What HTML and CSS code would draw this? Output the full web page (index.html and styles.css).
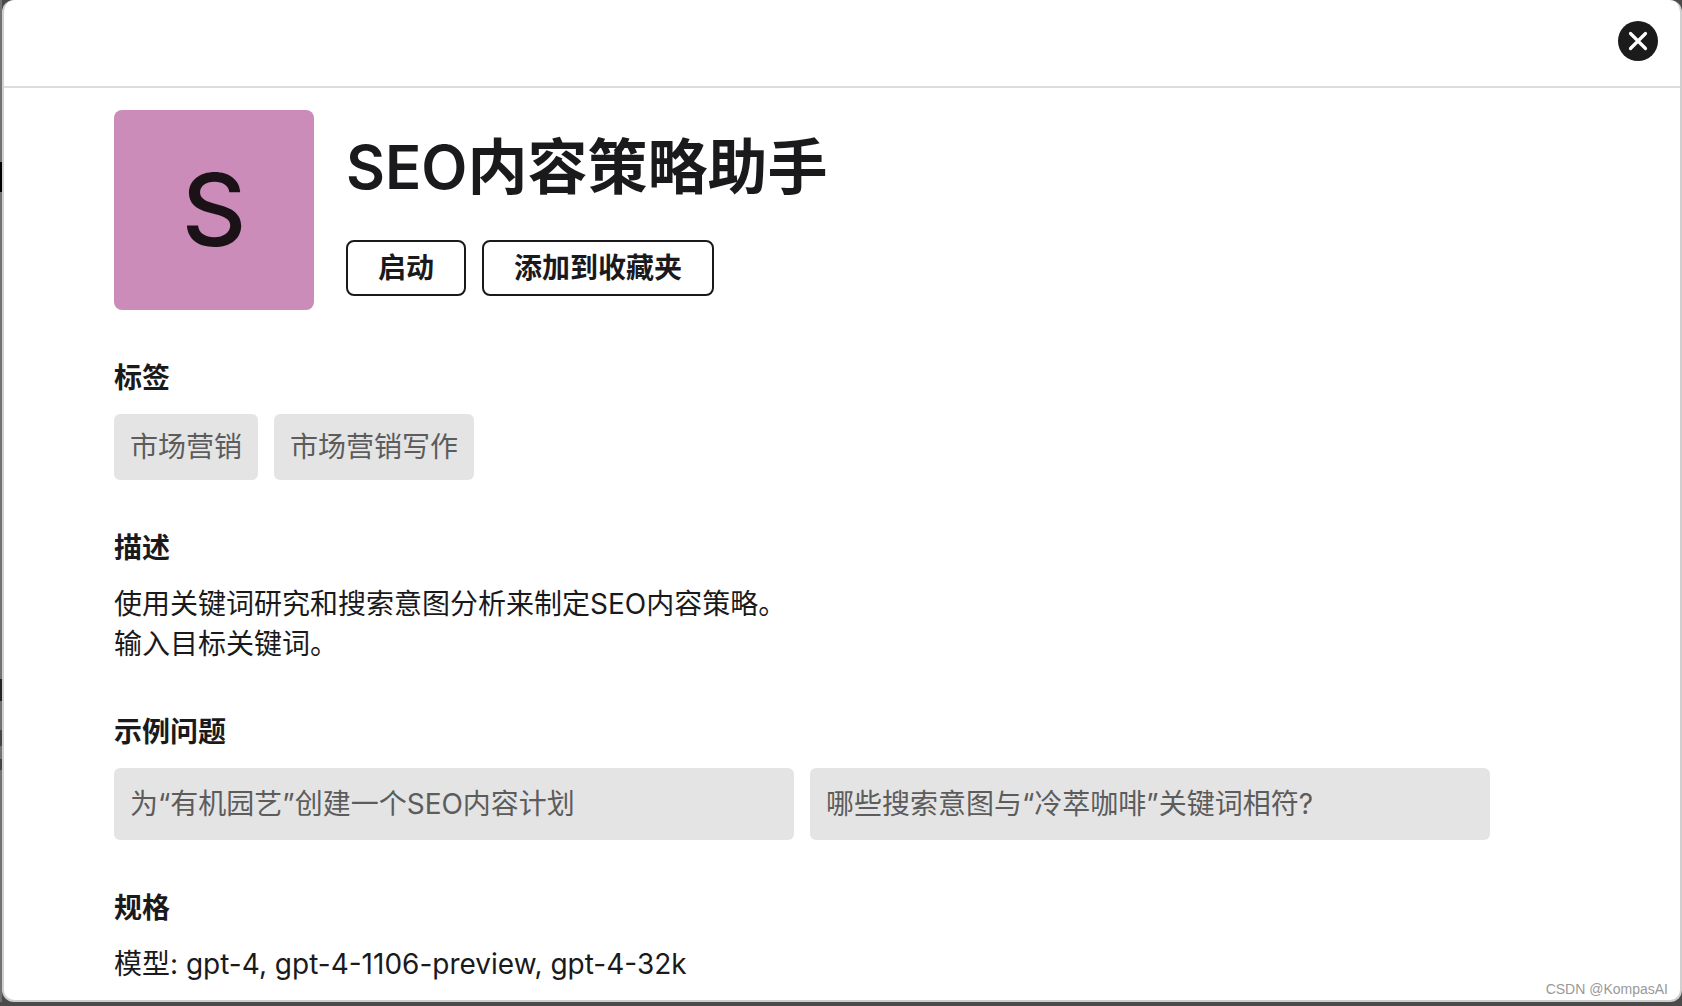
FILE: index.html
```html
<!DOCTYPE html>
<html lang="zh-CN">

<head>
    <meta charset="UTF-8">
    <meta name="viewport" content="width=device-width, initial-scale=1.0">
    <title>SEO内容策略助手</title>
    <link rel="stylesheet" href="styles.css">
</head>

<body>

    <div class="modal" role="dialog" aria-labelledby="assistant-name">
        <header class="modal-header">
            <button class="close-btn" type="button" aria-label="关闭">
                <svg viewBox="0 0 40 40" width="40" height="40" aria-hidden="true">
                    <circle cx="20" cy="20" r="20" fill="#1b1b1b" />
                    <path d="M12.5 12.5L27.5 27.5M27.5 12.5L12.5 27.5" stroke="#fff" stroke-width="3.2" stroke-linecap="round" />
                </svg>
            </button>
        </header>

        <main class="modal-body">
            <!-- Assistant name and actions -->
            <div class="intro">
                <div class="avatar">S</div>
                <div class="intro-text">
                    <h1 id="assistant-name">SEO内容策略助手</h1>
                    <div class="actions">
                        <button class="btn" type="button">启动</button>
                        <button class="btn" type="button">添加到收藏夹</button>
                    </div>
                </div>
            </div>

            <section>
                <h2>标签</h2>
                <div class="tags">
                    <span class="tag">市场营销</span>
                    <span class="tag">市场营销写作</span>
                </div>
            </section>

            <section>
                <h2>描述</h2>
                <p>使用关键词研究和搜索意图分析来制定SEO内容策略。<br>输入目标关键词。</p>
            </section>

            <section>
                <h2>示例问题</h2>
                <div class="questions">
                    <button class="question" type="button">为“有机园艺”创建一个SEO内容计划</button>
                    <button class="question" type="button">哪些搜索意图与“冷萃咖啡”关键词相符?</button>
                </div>
            </section>

            <section>
                <h2>规格</h2>
                <p>模型: gpt-4, gpt-4-1106-preview, gpt-4-32k</p>
            </section>
        </main>
    </div>

    <div class="watermark">CSDN @KompasAI</div>

</body>

</html>
```

FILE: styles.css
```css
* {
    box-sizing: border-box;
}

body {
    margin: 0;
    min-height: 100vh;
    padding: 0 0 4px 2px;
    display: flex;
    font-family: Inter, "Noto Sans CJK SC", sans-serif;
    font-size: 28px;
    line-height: 40px;
    color: #1a1a1c;
    background-color: #4a4a4a;
    /* edge of the dimmed page behind the modal */
    background-image: linear-gradient(#727272 162px, #000 162px, #000 192px, #727272 192px, #727272 679px, #222 679px, #222 701px, #727272 701px, #727272 730px, #444 730px, #444 746px, #727272 746px, #727272 759px, #444 759px, #444 770px, #727272 770px);
    background-size: 2px calc(100% - 4px);
    background-repeat: no-repeat;
}

.modal {
    flex: 1;
    background-color: #fff;
    border: 2px solid #cfcfcf;
    border-top: none;
    border-radius: 12px;
}

.modal-header {
    display: flex;
    justify-content: flex-end;
    padding: 21px 22px 25px;
    border-bottom: 2px solid #dcdcdc;
}

.close-btn {
    display: flex;
    padding: 0;
    border: none;
    background: none;
    cursor: pointer;
}

.modal-body {
    display: flex;
    flex-direction: column;
    gap: 48px;
    padding: 22px 190px 16px 110px;
}

.intro {
    display: flex;
    gap: 32px;
}

.avatar {
    display: flex;
    justify-content: center;
    align-items: center;
    width: 200px;
    height: 200px;
    border-radius: 8px;
    background-color: #cb8cb9;
    color: #1b1218;
    font-size: 100px;
    font-weight: 500;
}

.intro-text {
    display: flex;
    flex-direction: column;
    justify-content: center;
    gap: 30px;
}

h1 {
    margin: 0;
    font-size: 60px;
    line-height: 86px;
    font-weight: 600;
}

h2 {
    margin: 0 0 16px;
    font-size: 28px;
    line-height: 40px;
    font-weight: 600;
}

p {
    margin: 0;
}

.actions,
.tags {
    display: flex;
    gap: 16px;
}

.btn {
    height: 56px;
    padding: 0 30px;
    border: 2px solid #1a1a1c;
    border-radius: 8px;
    background-color: #fff;
    color: #1a1a1c;
    font: inherit;
    font-weight: 600;
    cursor: pointer;
}

.tag {
    padding: 13px 16px;
    border-radius: 6px;
    background-color: #e4e4e4;
    color: #5c5c5c;
}

.questions {
    display: grid;
    grid-template-columns: 1fr 1fr;
    gap: 16px;
}

.question {
    padding: 16px;
    border: none;
    border-radius: 6px;
    background-color: #e4e4e4;
    color: #5c5c5c;
    font: inherit;
    text-align: left;
    cursor: pointer;
}

.watermark {
    position: absolute;
    right: 14px;
    bottom: 7px;
    font-family: "Liberation Sans", sans-serif;
    font-size: 14px;
    line-height: 20px;
    color: #999;
}
```
